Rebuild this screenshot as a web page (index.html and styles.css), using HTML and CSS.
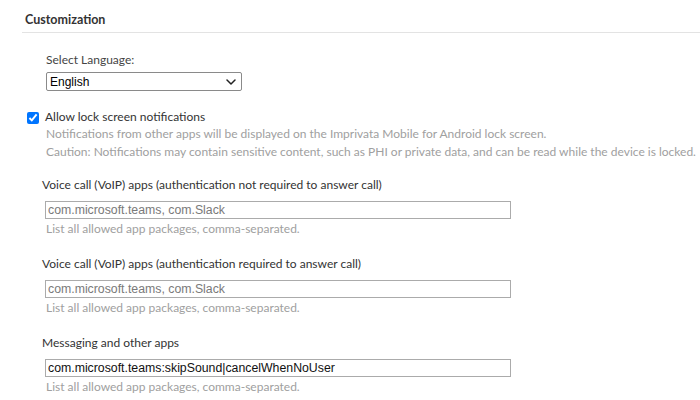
FILE: index.html
```html
<!DOCTYPE html>
<html lang="en">
<head>
<meta charset="utf-8">
<title>Customization</title>
<link rel="stylesheet" href="styles.css">
</head>
<body>
<section class="panel">
  <h2 class="section-title">Customization</h2>

  <div class="lang-field">
    <label class="lang-label" for="lang">Select Language:</label>
    <div class="select-wrap">
      <select id="lang" class="lang-select">
        <option>English</option>
      </select>
      <svg class="chevron" width="10" height="6" viewBox="0 0 10 6" aria-hidden="true">
        <path d="M1 1 L5 5 L9 1" fill="none" stroke="#222" stroke-width="1.5" stroke-linecap="round" stroke-linejoin="round"/>
      </svg>
    </div>
  </div>

  <div class="check-row">
    <input type="checkbox" id="lock" class="check" checked>
    <div class="check-body">
      <label for="lock" class="check-label">Allow lock screen notifications</label>
      <p class="desc">Notifications from other apps will be displayed on the Imprivata Mobile for Android lock screen.</p>
      <p class="desc">Caution: Notifications may contain sensitive content, such as PHI or private data, and can be read while the device is locked.</p>
    </div>
  </div>

  <div class="app-field">
    <label class="app-label">Voice call (VoIP) apps (authentication not required to answer call)</label>
    <input class="app-input" type="text" placeholder="com.microsoft.teams, com.Slack">
    <p class="help">List all allowed app packages, comma-separated.</p>
  </div>

  <div class="app-field">
    <label class="app-label">Voice call (VoIP) apps (authentication required to answer call)</label>
    <input class="app-input" type="text" placeholder="com.microsoft.teams, com.Slack">
    <p class="help">List all allowed app packages, comma-separated.</p>
  </div>

  <div class="app-field">
    <label class="app-label">Messaging and other apps</label>
    <input class="app-input" type="text" value="com.microsoft.teams:skipSound|cancelWhenNoUser">
    <p class="help">List all allowed app packages, comma-separated.</p>
  </div>
</section>
</body>
</html>
```

FILE: styles.css
```css
html, body {
  margin: 0;
  padding: 0;
  background: #ffffff;
}

body {
  font-family: Lato, "Open Sans", sans-serif;
  font-size: 12px;
  line-height: 18px;
  color: #333333;
}

.panel {
  display: flex;
  flex-direction: column;
  align-items: flex-start;
}

.section-title {
  align-self: stretch;
  margin: 11px 0 0 22px;
  padding: 0 0 3px 3px;
  font-size: 12.5px;
  line-height: 18px;
  font-weight: 700;
  color: #333333;
  border-bottom: 1px solid #e3e3e3;
}

.lang-field {
  display: flex;
  flex-direction: column;
  align-items: flex-start;
  margin: 18px 0 0 46px;
}

.lang-label {
  color: #444444;
}

.select-wrap {
  position: relative;
  margin-top: 3px;
  display: flex;
}

.lang-select {
  -webkit-appearance: none;
  appearance: none;
  box-sizing: border-box;
  width: 196px;
  height: 19px;
  padding: 0 20px 0 3px;
  font-family: Arial, "Liberation Sans", sans-serif;
  font-size: 12px;
  color: #000000;
  background: #ffffff;
  border: 1px solid #8a8a8a;
  border-radius: 2px;
}

.chevron {
  position: absolute;
  right: 6px;
  top: 7px;
  pointer-events: none;
}

.check-row {
  display: flex;
  align-items: flex-start;
  margin: 17px 0 0 27px;
  gap: 6px;
}

.check {
  width: 12px;
  height: 12px;
  margin: 4px 0 0 0;
  accent-color: #0075ff;
}

.check-body {
  display: flex;
  flex-direction: column;
}

.check-label {
  line-height: 17px;
  color: #333333;
}

.desc {
  margin: 0;
  padding-left: 1px;
  color: #a0a0a0;
}

.app-field {
  display: flex;
  flex-direction: column;
  align-items: flex-start;
  margin: 15px 0 0 42px;
}

.app-field + .app-field {
  margin-top: 17px;
}

.app-label {
  color: #333333;
}

.app-input {
  box-sizing: border-box;
  margin: 7px 0 0 3px;
  width: 466px;
  height: 18px;
  padding: 0 2px;
  font-family: Arial, "Liberation Sans", sans-serif;
  font-size: 12.3px;
  color: #111111;
  border: 1px solid #ababab;
  border-radius: 0;
  outline: none;
}

.app-input::placeholder {
  color: #7a7a7a;
}

.help {
  margin: 1px 0 0 4px;
  color: #a0a0a0;
}
```
